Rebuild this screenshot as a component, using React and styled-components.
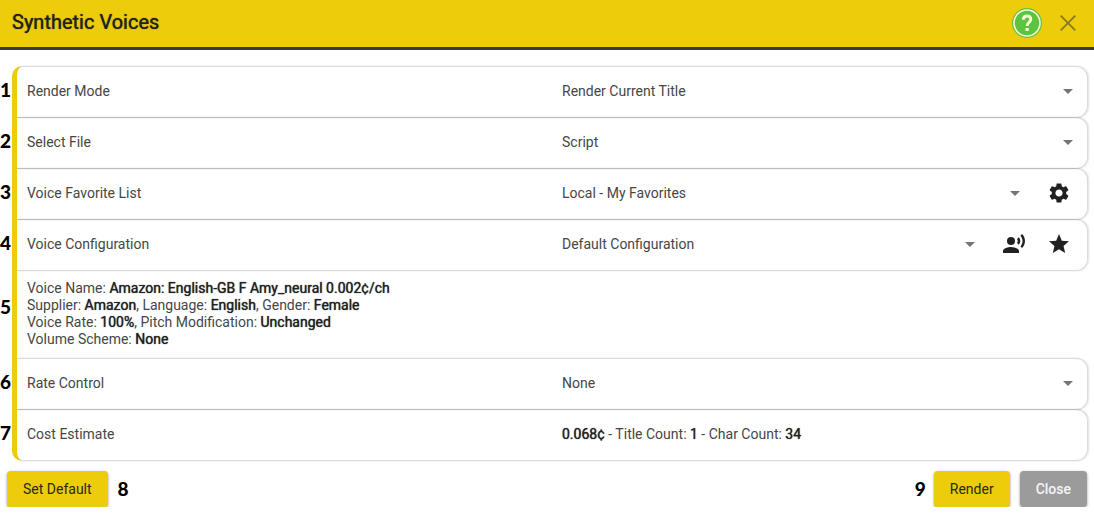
import styled, { createGlobalStyle } from "styled-components"
import { useState } from "react"
import { MdArrowDropDown, MdRecordVoiceOver, MdSettings, MdStar } from "react-icons/md"

function SelectField({ id, options, children }) {

    const [value, setValue] = useState(options[0])

    return (
        <DivValue>
            <DivSelect>
                <SelectInput id={id} value={value} onChange={ e => setValue(e.target.value) }>
                    {options.map((option) => (
                        <option key={option}>{option}</option>
                    ))}
                </SelectInput>
                <SpanArrow><MdArrowDropDown size={24} /></SpanArrow>
            </DivSelect>
            {children && <DivActions>{children}</DivActions>}
        </DivValue>
    )

}

function App() {

    return (
        <>
            <GlobalStyle />
            <Header>
                <H1Title>Synthetic Voices</H1Title>
                <ButtonHelp aria-label="Help">
                    <svg width="30" height="30" viewBox="0 0 30 30">
                        <circle cx="15" cy="15" r="15" fill="#5cc443" />
                        <circle cx="15" cy="15" r="13" fill="none" stroke="#fbf8d2" strokeWidth="1.6" />
                        <path d="M11.3 11.8C11.3 9.2 12.9 8 15 8s3.8 1.2 3.8 3.4c0 2.9-3.6 3-3.6 6.6" fill="none" stroke="#fbf8d2" strokeWidth="2.8" />
                        <rect x="13.5" y="20" width="3.2" height="3" fill="#fbf8d2" />
                    </svg>
                </ButtonHelp>
                <ButtonDismiss aria-label="Dismiss">
                    <svg width="16" height="16" viewBox="0 0 16 16">
                        <path d="M.7.7l14.6 14.6M15.3.7L.7 15.3" stroke="#897a1c" strokeWidth="1.8" />
                    </svg>
                </ButtonDismiss>
            </Header>

            <Main>
                <DivPanel>
                    <DivRow>
                        <SpanRowNumber>1</SpanRowNumber>
                        <Label htmlFor="mode">Render Mode</Label>
                        <SelectField id="mode" options={["Render Current Title"]} />
                    </DivRow>
                    <DivRow>
                        <SpanRowNumber>2</SpanRowNumber>
                        <Label htmlFor="file">Select File</Label>
                        <SelectField id="file" options={["Script"]} />
                    </DivRow>
                    <DivRow>
                        <SpanRowNumber>3</SpanRowNumber>
                        <Label htmlFor="favorites">Voice Favorite List</Label>
                        <SelectField id="favorites" options={["Local - My Favorites"]}>
                            <ButtonIcon aria-label="Settings"><MdSettings size={24} /></ButtonIcon>
                        </SelectField>
                    </DivRow>
                    <DivRow>
                        <SpanRowNumber>4</SpanRowNumber>
                        <Label htmlFor="configuration">Voice Configuration</Label>
                        <SelectField id="configuration" options={["Default Configuration"]}>
                            <ButtonIcon aria-label="Voice"><MdRecordVoiceOver size={24} /></ButtonIcon>
                            <ButtonIcon aria-label="Favorite"><MdStar size={24} /></ButtonIcon>
                        </SelectField>
                    </DivRow>
                    <DivDetails>
                        <SpanRowNumber $top="24px">5</SpanRowNumber>
                        <div>Voice Name: <b>Amazon: English-GB F Amy_neural 0.002¢/ch</b></div>
                        <div>Supplier: <b>Amazon</b>, Language: <b>English</b>, Gender: <b>Female</b></div>
                        <div>Voice Rate: <b>100%</b>, Pitch Modification: <b>Unchanged</b></div>
                        <div>Volume Scheme: <b>None</b></div>
                    </DivDetails>
                    <DivRow>
                        <SpanRowNumber>6</SpanRowNumber>
                        <Label htmlFor="rate">Rate Control</Label>
                        <SelectField id="rate" options={["None"]} />
                    </DivRow>
                    <DivRow>
                        <SpanRowNumber>7</SpanRowNumber>
                        <SpanLabel>Cost Estimate</SpanLabel>
                        <DivValue>
                            <span><b>0.068¢</b> - Title Count: <b>1</b> - Char Count: <b>34</b></span>
                        </DivValue>
                    </DivRow>
                </DivPanel>
            </Main>

            <Footer>
                <Button>Set Default</Button>
                <SpanNumber>8</SpanNumber>
                <DivSpacer />
                <DivNumbered>
                    <SpanNumber>9</SpanNumber>
                    <Button>Render</Button>
                </DivNumbered>
                <Button $muted>Close</Button>
            </Footer>
        </>
    )

}

const GlobalStyle = createGlobalStyle`
    * {
        box-sizing: border-box;
    }
    body {
        margin: 0;
        background-color: white;
        color: #464646;
        font-family: Roboto, "Liberation Sans", sans-serif;
        font-size: 14px;
        font-weight: 400;
    }
    b {
        color: #212121;
        font-weight: 400;
        text-shadow: 0 0 1px #212121;
    }
    button, select {
        border: none;
        padding: 0;
        background: none;
        color: inherit;
        font: inherit;
        cursor: pointer;
    }
    svg {
        display: block;
    }
`

const Header = styled.header`
    display: flex;
    align-items: center;
    height: 50px;
    padding: 0 18px 2px 12px;
    background-color: #edcd0b;
    border-bottom: 3px solid #3a3a3a;
`

const H1Title = styled.h1`
    flex: 1;
    margin: 0;
    padding-bottom: 2px;
    color: #212121;
    font-size: 20px;
    font-weight: 400;
    line-height: 24px;
    text-shadow: 0 0 1px #212121;
`

const ButtonHelp = styled.button`
    margin-right: 18px;
`

const ButtonDismiss = styled.button``

const Main = styled.main`
    padding: 16px 6px 10px 12px;
`

const DivPanel = styled.div`
    border-left: 5px solid #edcd0b;
    border-radius: 10px;
`

const DivRow = styled.div`
    position: relative;
    display: grid;
    grid-template-columns: 1fr 1fr;
    align-items: center;
    height: 52px;
    padding-bottom: 2px;
    border: 1px solid rgba(0, 0, 0, 0.14);
    border-left: none;
    border-radius: 0 12px 12px 0;
    box-shadow: 1px 0 2px rgba(0, 0, 0, 0.12);

    /* neighbouring rows share one line */
    & + & {
        margin-top: -1px;
    }
    &:first-child {
        border-top-left-radius: 6px;
    }
    &:last-child {
        border-bottom-left-radius: 6px;
    }
`

const Label = styled.label`
    padding-left: 10px;
`

const SpanLabel = styled.span`
    padding-left: 10px;
`

const DivValue = styled.div`
    display: flex;
    align-items: center;
    padding: 0 6px 0 10px;
`

const DivSelect = styled.div`
    display: grid;
    flex: 1;
    align-items: center;
`

const SelectInput = styled.select`
    grid-area: 1 / 1;
    appearance: none;
    width: 100%;
    height: 32px;
`

const SpanArrow = styled.span`
    grid-area: 1 / 1;
    justify-self: end;
    margin-right: 1px;
    color: #757575;
    pointer-events: none;
`

const DivActions = styled.div`
    display: flex;
    margin-left: 8px;
    color: #212121;
`

const ButtonIcon = styled.button`
    display: grid;
    place-items: center;
    width: 45px;
    height: 40px;
`

const DivDetails = styled.div`
    position: relative;
    padding: 9px 10px 10px;
    line-height: 17px;
`

const SpanNumber = styled.span`
    color: black;
    font-family: Lato, "Open Sans", sans-serif;
    font-size: 19px;
    font-weight: 900;
    line-height: 24px;
`

const SpanRowNumber = styled(SpanNumber)`
    position: absolute;
    top: ${ props => props.$top || "calc(50% - 14px)" };
    left: -17px;
`

const Footer = styled.footer`
    display: flex;
    align-items: center;
    gap: 10px;
    padding: 0 7px;
`

const DivSpacer = styled.div`
    flex: 1;
`

const DivNumbered = styled.div`
    display: flex;
    align-items: center;
    gap: 8px;
`

const Button = styled.button`
    height: 36px;
    padding: 0 16px 1px;
    border-radius: 4px;
    background-color: ${ props => props.$muted ? "#9b9b9b" : "#edcd0b" };
    color: ${ props => props.$muted ? "#f5f5f5" : "#2c2810" };
    font-weight: ${ props => props.$muted ? 500 : 400 };
    box-shadow: 0 1px 3px rgba(0, 0, 0, 0.4);
`

export default App
